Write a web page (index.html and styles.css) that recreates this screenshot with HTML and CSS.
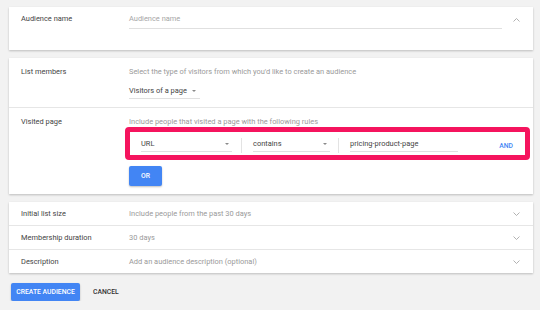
FILE: index.html
```html
<!DOCTYPE html>
<html lang="en">
<head>
    <meta charset="UTF-8">
    <meta name="viewport" content="width=device-width, initial-scale=1.0">
    <title>New audience</title>
    <link rel="stylesheet" href="styles.css">
</head>
<body>
    <div class="page">
        <!-- Name -->
        <section class="card">
            <div class="row row-name">
                <div class="label">Audience name</div>
                <div class="value">
                    <div class="input placeholder">Audience name</div>
                </div>
                <svg class="chevron" width="7" height="4" viewBox="0 0 7 4"><polyline points="0.5,3.5 3.5,0.5 6.5,3.5" /></svg>
            </div>
        </section>

        <!-- Members + rules -->
        <section class="card">
            <div class="row row-members">
                <div class="label">List members</div>
                <div class="value">
                    <div class="hint">Select the type of visitors from which you'd like to create an audience</div>
                    <div class="select select-members">Visitors of a page <span class="caret"></span></div>
                </div>
            </div>
            <div class="row row-visited">
                <div class="label">Visited page</div>
                <div class="value value-wide">
                    <div class="hint">Include people that visited a page with the following rules</div>
                    <div class="rule-box">
                        <div class="rule">
                            <div class="select select-url">URL <span class="caret"></span></div>
                            <div class="divider"></div>
                            <div class="select select-op">contains <span class="caret"></span></div>
                            <div class="divider"></div>
                            <div class="select select-text">pricing-product-page</div>
                            <button class="link-button">AND</button>
                        </div>
                    </div>
                    <button class="btn btn-or">OR</button>
                </div>
            </div>
        </section>

        <!-- Options -->
        <section class="card">
            <div class="row row-short">
                <div class="label">Initial list size</div>
                <div class="value hint">Include people from the past 30 days</div>
                <svg class="chevron" width="7" height="4" viewBox="0 0 7 4"><polyline points="0.5,0.5 3.5,3.5 6.5,0.5" /></svg>
            </div>
            <div class="row row-short">
                <div class="label">Membership duration</div>
                <div class="value hint">30 days</div>
                <svg class="chevron" width="7" height="4" viewBox="0 0 7 4"><polyline points="0.5,0.5 3.5,3.5 6.5,0.5" /></svg>
            </div>
            <div class="row row-short">
                <div class="label">Description</div>
                <div class="value hint">Add an audience description (optional)</div>
                <svg class="chevron" width="7" height="4" viewBox="0 0 7 4"><polyline points="0.5,0.5 3.5,3.5 6.5,0.5" /></svg>
            </div>
        </section>

        <div class="actions">
            <button class="btn btn-create">CREATE AUDIENCE</button>
            <button class="link-button cancel">CANCEL</button>
        </div>
    </div>
</body>
</html>
```

FILE: styles.css
```css
body {
    margin: 0;
    background: #f2f2f2;
    font-family: Roboto, "Liberation Sans", Arial, sans-serif;
    font-size: 7.45px;
    line-height: 10px;
    color: #444;
}

.page {
    padding: 7px 7px 0 9px;
}

.card {
    background: white;
    box-shadow: 0 1px 2px rgba(0, 0, 0, 0.22);
    margin-bottom: 8px;
}

.row {
    display: grid;
    grid-template-columns: 108px 373px 1fr;
    padding-left: 12px;
    border-top: 1px solid #e6e6e6;
}

.row:first-child {
    border-top: none;
}

.label {
    color: #444;
}

.hint {
    color: #9a9a9a;
}

.chevron {
    fill: none;
    stroke: #9e9e9e;
    stroke-width: 0.8;
    margin-left: 11px;
    align-self: center;
}

/* name row */
.row-name {
    padding-top: 7px;
    padding-bottom: 21px;
}

.row-name .chevron {
    align-self: start;
    margin-top: 4px;
}

.input {
    padding-bottom: 4px;
    border-bottom: 1px solid #e0e0e0;
}

.placeholder {
    color: #a6a6a6;
}

/* members row */
.row-members {
    padding-top: 9px;
    padding-bottom: 8px;
}

.select {
    position: relative;
    padding-bottom: 2px;
    border-bottom: 1px solid #e0e0e0;
    color: #444;
}

.select-members {
    display: inline-block;
    margin-top: 9px;
    width: 71px;
    box-sizing: border-box;
}

.caret {
    display: inline-block;
    width: 0;
    height: 0;
    border-left: 2.5px solid transparent;
    border-right: 2.5px solid transparent;
    border-top: 2.5px solid #8a8a8a;
    vertical-align: middle;
    margin-left: 3px;
}

/* visited row */
.row-visited {
    padding-top: 9px;
    padding-bottom: 8px;
}

.value-wide {
    grid-column: 2 / 4;
}

.rule-box {
    margin-left: -4px;
    margin-right: 3px;
    border: 5px solid #f5145e;
    border-radius: 4px;
}

.rule {
    display: flex;
    align-items: flex-start;
    height: 23px;
    padding: 7px 12px 0 11px;
    box-sizing: border-box;
}

.rule .caret {
    position: absolute;
    right: 3px;
    top: 4px;
    margin: 0;
}

.select-url {
    width: 91px;
}

.select-op {
    width: 77px;
}

.select-text {
    width: 108px;
}

.divider {
    width: 1px;
    height: 15px;
    background: #e3e3e3;
    margin: -1px 11px 0 9px;
}

.select-op + .divider {
    margin-left: 8px;
}

.link-button {
    background: none;
    border: none;
    padding: 0;
    font-family: inherit;
    font-size: 6.8px;
    font-weight: 500;
    line-height: 10px;
    color: #4285f4;
    margin-left: auto;
    margin-top: 2px;
}

.btn {
    background: #4285f4;
    color: white;
    border: none;
    border-radius: 2px;
    font-family: inherit;
    font-weight: 500;
    font-size: 6.8px;
    box-shadow: 0 1px 2px rgba(0, 0, 0, 0.25);
    padding: 0;
}

.btn-or {
    display: block;
    width: 33px;
    height: 20px;
    margin-top: 6px;
}

/* option rows */
.row-short {
    padding-top: 7px;
    padding-bottom: 6px;
}

/* actions */
.actions {
    display: flex;
    align-items: center;
    padding-top: 2px;
    margin-left: 2px;
}

.btn-create {
    width: 69px;
    height: 18px;
}

.cancel {
    color: #333;
    margin: 0 0 0 13px;
}
```
